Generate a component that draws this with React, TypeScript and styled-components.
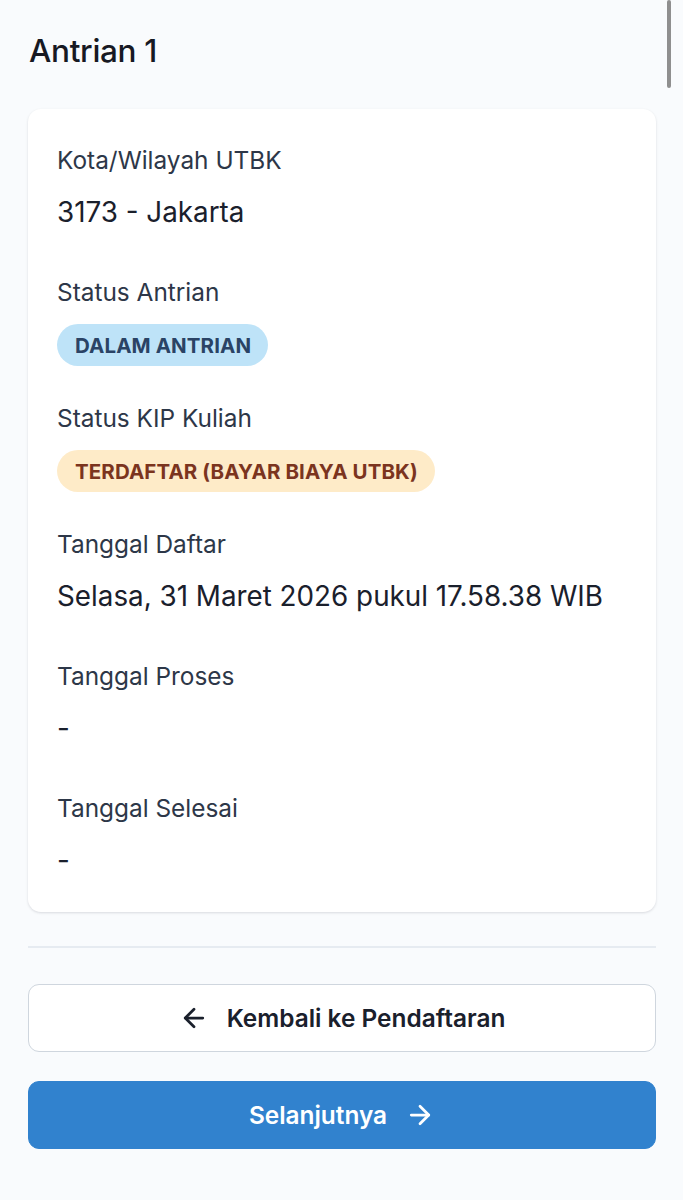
import React from 'react'
import styled, { createGlobalStyle } from 'styled-components'
import { ArrowLeft, ArrowRight } from 'lucide-react'

const GlobalStyle = createGlobalStyle`
  html, body {
    margin: 0;
    padding: 0;
    background: #f9fbfd;
    font-family: Inter, "Noto Sans", "Liberation Sans", sans-serif;
    color: #1a202c;
  }
  * { box-sizing: border-box; }
`;

const Page = styled.div`
  min-height: 1200px;
  padding: 26px 27px 40px 28px;
`;

const Title = styled.h1`
  margin: 0 0 33px 1px;
  font-size: 31.5px;
  line-height: 50px;
  font-weight: 500;
  letter-spacing: -0.3px;
  color: #171923;
`;

const Card = styled.section`
  background: #ffffff;
  border-radius: 13px;
  box-shadow: 0 1px 3px rgba(15, 23, 42, 0.1), 0 1px 2px rgba(15, 23, 42, 0.04);
  padding: 35px 29px 24px;
  display: flex;
  flex-direction: column;
  gap: 36px;
`;

const Field = styled.div`
  display: flex;
  flex-direction: column;
  align-items: flex-start;
  gap: 15px;
`;

const Label = styled.div`
  font-size: 24.4px;
  line-height: 33px;
  color: #2d3748;
`;

const Value = styled.div`
  font-size: 27.8px;
  line-height: 41px;
  color: #1a202c;
  padding-bottom: 7px;
`;

const Badge = styled.span<{ $tone: 'blue' | 'orange' }>`
  display: inline-flex;
  align-items: center;
  height: 42px;
  padding: 0 17px 0 18px;
  border-radius: 21px;
  font-size: 20.5px;
  font-weight: 700;
  letter-spacing: 0.1px;
  background: ${p => (p.$tone === 'blue' ? '#bee3f8' : '#feebc8')};
  color: ${p => (p.$tone === 'blue' ? '#2a4365' : '#7b341e')};
`;

const Divider = styled.hr`
  border: none;
  border-top: 2px solid #e6ebf1;
  margin: 34px 0 36px;
`;

const Actions = styled.div`
  display: flex;
  flex-direction: column;
  gap: 29px;
`;

const Button = styled.button<{ $primary?: boolean }>`
  display: flex;
  align-items: center;
  justify-content: center;
  gap: 18px;
  width: 100%;
  height: 68px;
  border-radius: 11px;
  font-family: inherit;
  font-size: 24.4px;
  font-weight: 600;
  cursor: pointer;
  border: ${p => (p.$primary ? '1px solid #3182ce' : '1.5px solid #cfd6de')};
  background: ${p => (p.$primary ? '#3182ce' : '#ffffff')};
  color: ${p => (p.$primary ? '#ffffff' : '#1a202c')};
`;

const ScrollThumb = styled.div`
  position: fixed;
  top: 0;
  right: 12px;
  width: 4px;
  height: 88px;
  border-radius: 2px;
  background: #8f8f8f;
`;

const fields = [
  { label: 'Kota/Wilayah UTBK', value: '3173 - Jakarta' },
  { label: 'Status Antrian', badge: 'DALAM ANTRIAN', tone: 'blue' as const },
  { label: 'Status KIP Kuliah', badge: 'TERDAFTAR (BAYAR BIAYA UTBK)', tone: 'orange' as const },
  { label: 'Tanggal Daftar', value: 'Selasa, 31 Maret 2026 pukul 17.58.38 WIB' },
  { label: 'Tanggal Proses', value: '-' },
  { label: 'Tanggal Selesai', value: '-' },
]

export default function App() {
  return (
    <>
      <GlobalStyle />
      <Page>
        <Title>Antrian 1</Title>
        <Card>
          {fields.map(f => (
            <Field key={f.label}>
              <Label>{f.label}</Label>
              {f.badge ? <Badge $tone={f.tone!}>{f.badge}</Badge> : <Value>{f.value}</Value>}
            </Field>
          ))}
        </Card>
        <Divider />
        <Actions>
          <Button>
            <ArrowLeft size={30} strokeWidth={2.2} />
            Kembali ke Pendaftaran
          </Button>
          <Button $primary>
            Selanjutnya
            <ArrowRight size={30} strokeWidth={2.2} />
          </Button>
        </Actions>
      </Page>
      <ScrollThumb />
    </>
  )
}
